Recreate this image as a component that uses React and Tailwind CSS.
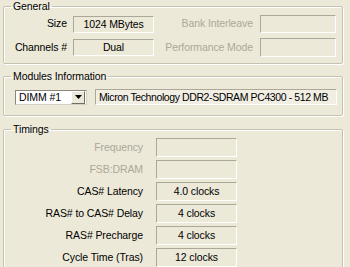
const font = { fontFamily: '"Liberation Sans", Arial, sans-serif' };

const Box = ({ children, className = '' }) => (
    <div
        className={`flex items-center justify-center whitespace-nowrap border border-t-[#aca899] border-l-[#aca899] border-b-white border-r-white text-[10.5px] text-black leading-none ${className}`}
    >
        {children}
    </div>
);

const Group = ({ title, className = '', children }) => (
    <fieldset
        className={`ml-[3px] w-[340px] border border-[#c5c2b2] rounded-[2px] shadow-[inset_1px_1px_0_#fff,1px_1px_0_#fff] ${className}`}
    >
        <legend className="ml-[7px] px-[2px] text-[10.5px] leading-[13px] text-black">{title}</legend>
        {children}
    </fieldset>
);

const timings = [
    { label: 'Frequency', value: '', off: true },
    { label: 'FSB:DRAM', value: '', off: true },
    { label: 'CAS# Latency', value: '4.0 clocks' },
    { label: 'RAS# to CAS# Delay', value: '4 clocks' },
    { label: 'RAS# Precharge', value: '4 clocks' },
    { label: 'Cycle Time (Tras)', value: '12 clocks' },
];

export default function App() {
    return (
        <div className="w-[350px] h-[267px] overflow-hidden bg-[#ece9d8] text-[10.5px] tracking-[-0.1px] whitespace-nowrap" style={font}>
            {/* General */}
            <Group title="General" className="h-[64px]">
                <div className="flex flex-col gap-[5px] pt-[2px]">
                    <div className="flex items-center">
                        <span className="w-[63px] text-right text-black">Size</span>
                        <Box className="ml-[6px] w-[81px] h-[17px]">1024 MBytes</Box>
                        <span className="w-[99px] text-right text-[#aca899]">Bank Interleave</span>
                        <Box className="ml-[7px] w-[76px] h-[18px]" />
                    </div>
                    <div className="flex items-center">
                        <span className="w-[63px] text-right text-black">Channels #</span>
                        <Box className="ml-[6px] w-[81px] h-[17px]">Dual</Box>
                        <span className="w-[99px] text-right text-[#aca899]">Performance Mode</span>
                        <Box className="ml-[7px] w-[76px] h-[19px]" />
                    </div>
                </div>
            </Group>

            {/* Modules Information */}
            <Group title="Modules Information" className="mt-[6px] h-[46px]">
                <div className="flex items-center pt-[6px] pl-[11px]">
                    <div className="flex items-center w-[72px] h-[15px] bg-white border border-t-[#8a877a] border-l-[#8a877a] border-b-[#d4d0c8] border-r-[#d4d0c8]">
                        <span className="pl-[3px] flex-1 text-black leading-none">DIMM #1</span>
                        <div className="w-[14px] h-[13px] mr-[1px] flex items-center justify-center bg-[#ece9d8] border border-t-white border-l-white border-b-[#716f64] border-r-[#716f64]">
                            <svg width="7" height="4" viewBox="0 0 7 4">
                                <path d="M0 0h7L3.5 4z" fill="#000" />
                            </svg>
                        </div>
                    </div>
                    <Box className="ml-[8px] w-[242px] h-[16px] bg-[#f1efe4] !justify-start pl-[3px] tracking-[-0.4px]">
                        Micron Technology DDR2-SDRAM PC4300 - 512 MB
                    </Box>
                </div>
            </Group>

            {/* Timings */}
            <Group title="Timings" className="mt-[7px] h-[160px]">
                <div className="flex flex-col gap-[3px] pt-[2px]">
                    {timings.map((t) => (
                        <div key={t.label} className="flex items-center">
                            <span className={`w-[139px] text-right ${t.off ? 'text-[#aca899]' : 'text-black'}`}>
                                {t.label}
                            </span>
                            <Box className="ml-[13px] w-[81px] h-[19px]">{t.value}</Box>
                        </div>
                    ))}
                </div>
            </Group>
        </div>
    );
}
